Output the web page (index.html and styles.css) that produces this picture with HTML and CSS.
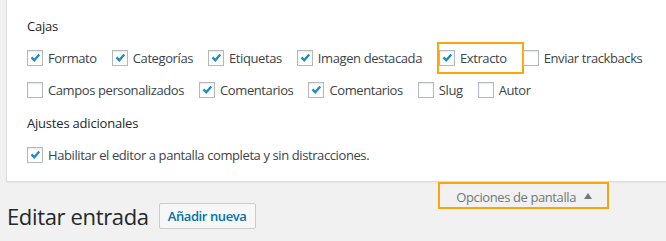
FILE: index.html
```html
<!DOCTYPE html>
<html lang="es">
<head>
<meta charset="utf-8">
<title>Editar entrada</title>
<link rel="stylesheet" href="styles.css">
</head>
<body>
<div class="screen-meta">
  <h5 class="group-title">Cajas</h5>
  <div class="prefs-row">
    <label class="pref"><span class="cb"><svg viewBox="0 0 16 16"><path d="M3 8.2 L5 6.3 L7.1 8.5 L11.9 3 L13.9 4.8 L7.2 12.6 Z"/></svg></span>Formato</label>
    <label class="pref"><span class="cb"><svg viewBox="0 0 16 16"><path d="M3 8.2 L5 6.3 L7.1 8.5 L11.9 3 L13.9 4.8 L7.2 12.6 Z"/></svg></span>Categorías</label>
    <label class="pref"><span class="cb"><svg viewBox="0 0 16 16"><path d="M3 8.2 L5 6.3 L7.1 8.5 L11.9 3 L13.9 4.8 L7.2 12.6 Z"/></svg></span>Etiquetas</label>
    <label class="pref"><span class="cb"><svg viewBox="0 0 16 16"><path d="M3 8.2 L5 6.3 L7.1 8.5 L11.9 3 L13.9 4.8 L7.2 12.6 Z"/></svg></span>Imagen destacada</label>
    <label class="pref highlight"><span class="cb"><svg viewBox="0 0 16 16"><path d="M3 8.2 L5 6.3 L7.1 8.5 L11.9 3 L13.9 4.8 L7.2 12.6 Z"/></svg></span>Extracto</label>
    <label class="pref"><span class="cb"></span>Enviar trackbacks</label>
  </div>
  <div class="prefs-row">
    <label class="pref"><span class="cb"></span>Campos personalizados</label>
    <label class="pref"><span class="cb"><svg viewBox="0 0 16 16"><path d="M3 8.2 L5 6.3 L7.1 8.5 L11.9 3 L13.9 4.8 L7.2 12.6 Z"/></svg></span>Comentarios</label>
    <label class="pref"><span class="cb"><svg viewBox="0 0 16 16"><path d="M3 8.2 L5 6.3 L7.1 8.5 L11.9 3 L13.9 4.8 L7.2 12.6 Z"/></svg></span>Comentarios</label>
    <label class="pref"><span class="cb"></span>Slug</label>
    <label class="pref"><span class="cb"></span>Autor</label>
  </div>
  <h5 class="group-title second">Ajustes adicionales</h5>
  <div class="prefs-row">
    <label class="pref"><span class="cb"><svg viewBox="0 0 16 16"><path d="M3 8.2 L5 6.3 L7.1 8.5 L11.9 3 L13.9 4.8 L7.2 12.6 Z"/></svg></span>Habilitar el editor a pantalla completa y sin distracciones.</label>
  </div>
</div>
<div class="below">
  <div class="title-row">
    <h1 class="page-title">Editar entrada</h1>
    <a class="title-action">Añadir nueva</a>
  </div>
  <button class="show-settings">Opciones de pantalla<span class="arrow"></span></button>
</div>
</body>
</html>
```
FILE: styles.css
```css
html, body {
  margin: 0;
  padding: 0;
}
body {
  background: #f1f1f1;
  font-family: "Open Sans", "Noto Sans", sans-serif;
  color: #32373c;
  font-size: 13px;
}
.screen-meta {
  margin-left: 6px;
  background: #fff;
  border-left: 1px solid #dcdcdc;
  border-bottom: 1px solid #dcdcdc;
  box-shadow: 0 1px 1px rgba(0,0,0,.04);
  padding: 16px 0 10px 20px;
  height: 155px;
  display: flex;
  flex-direction: column;
}
.group-title {
  margin: 0;
  font-size: 13px;
  font-weight: 400;
  line-height: 20px;
  letter-spacing: -0.2px;
  color: #23282d;
  margin-bottom: 6px;
}
.group-title.second {
  margin-top: 7px;
}
.prefs-row {
  display: flex;
  height: 32px;
}
.pref {
  position: relative;
  display: flex;
  align-items: center;
  line-height: 32px;
  padding-right: 15px;
  letter-spacing: -0.4px;
  color: #3c434a;
  white-space: nowrap;
}
.cb {
  width: 14px;
  height: 14px;
  border: 1px solid #b4b9be;
  background: #fff;
  box-shadow: inset 0 1px 2px rgba(0,0,0,.1);
  margin-right: 5px;
  display: flex;
  align-items: center;
  justify-content: center;
  flex: none;
}
.cb svg {
  width: 16px;
  height: 16px;
  fill: #1e8cbe;
}
.highlight {
  margin-left: 2px;
  padding-right: 16px;
}
.highlight::after {
  content: "";
  position: absolute;
  left: -2px;
  right: -1px;
  top: 0;
  bottom: 0;
  border: 2px solid #fba50a;
}
.below {
  display: flex;
  justify-content: space-between;
  align-items: flex-start;
}
.title-row {
  display: flex;
  align-items: flex-start;
  padding: 19px 0 0 7px;
}
.page-title {
  margin: 0;
  font-size: 22px;
  font-weight: 400;
  line-height: 30px;
  letter-spacing: -0.35px;
  color: #23282d;
}
.title-action {
  margin: 2px 0 0 10px;
  height: 24px;
  line-height: 24px;
  padding: 0 8px;
  border: 1px solid #ccc;
  border-radius: 2px;
  background: #f7f7f7;
  color: #0073aa;
  font-weight: 600;
  font-size: 13px;
  letter-spacing: -0.4px;
}
.show-settings {
  margin: 0 57px 0 0;
  border: 2px solid #fba50a;
  background: #f1f1f1;
  font-family: inherit;
  font-size: 13px;
  letter-spacing: -0.4px;
  color: #72777c;
  padding: 4px 15px 0 16px;
  height: 27px;
  line-height: 19px;
  display: flex;
  align-items: flex-start;
}
.arrow {
  width: 0;
  height: 0;
  border-left: 4px solid transparent;
  border-right: 4px solid transparent;
  border-bottom: 6px solid #72777c;
  margin: 5px 0 0 8px;
}
```
